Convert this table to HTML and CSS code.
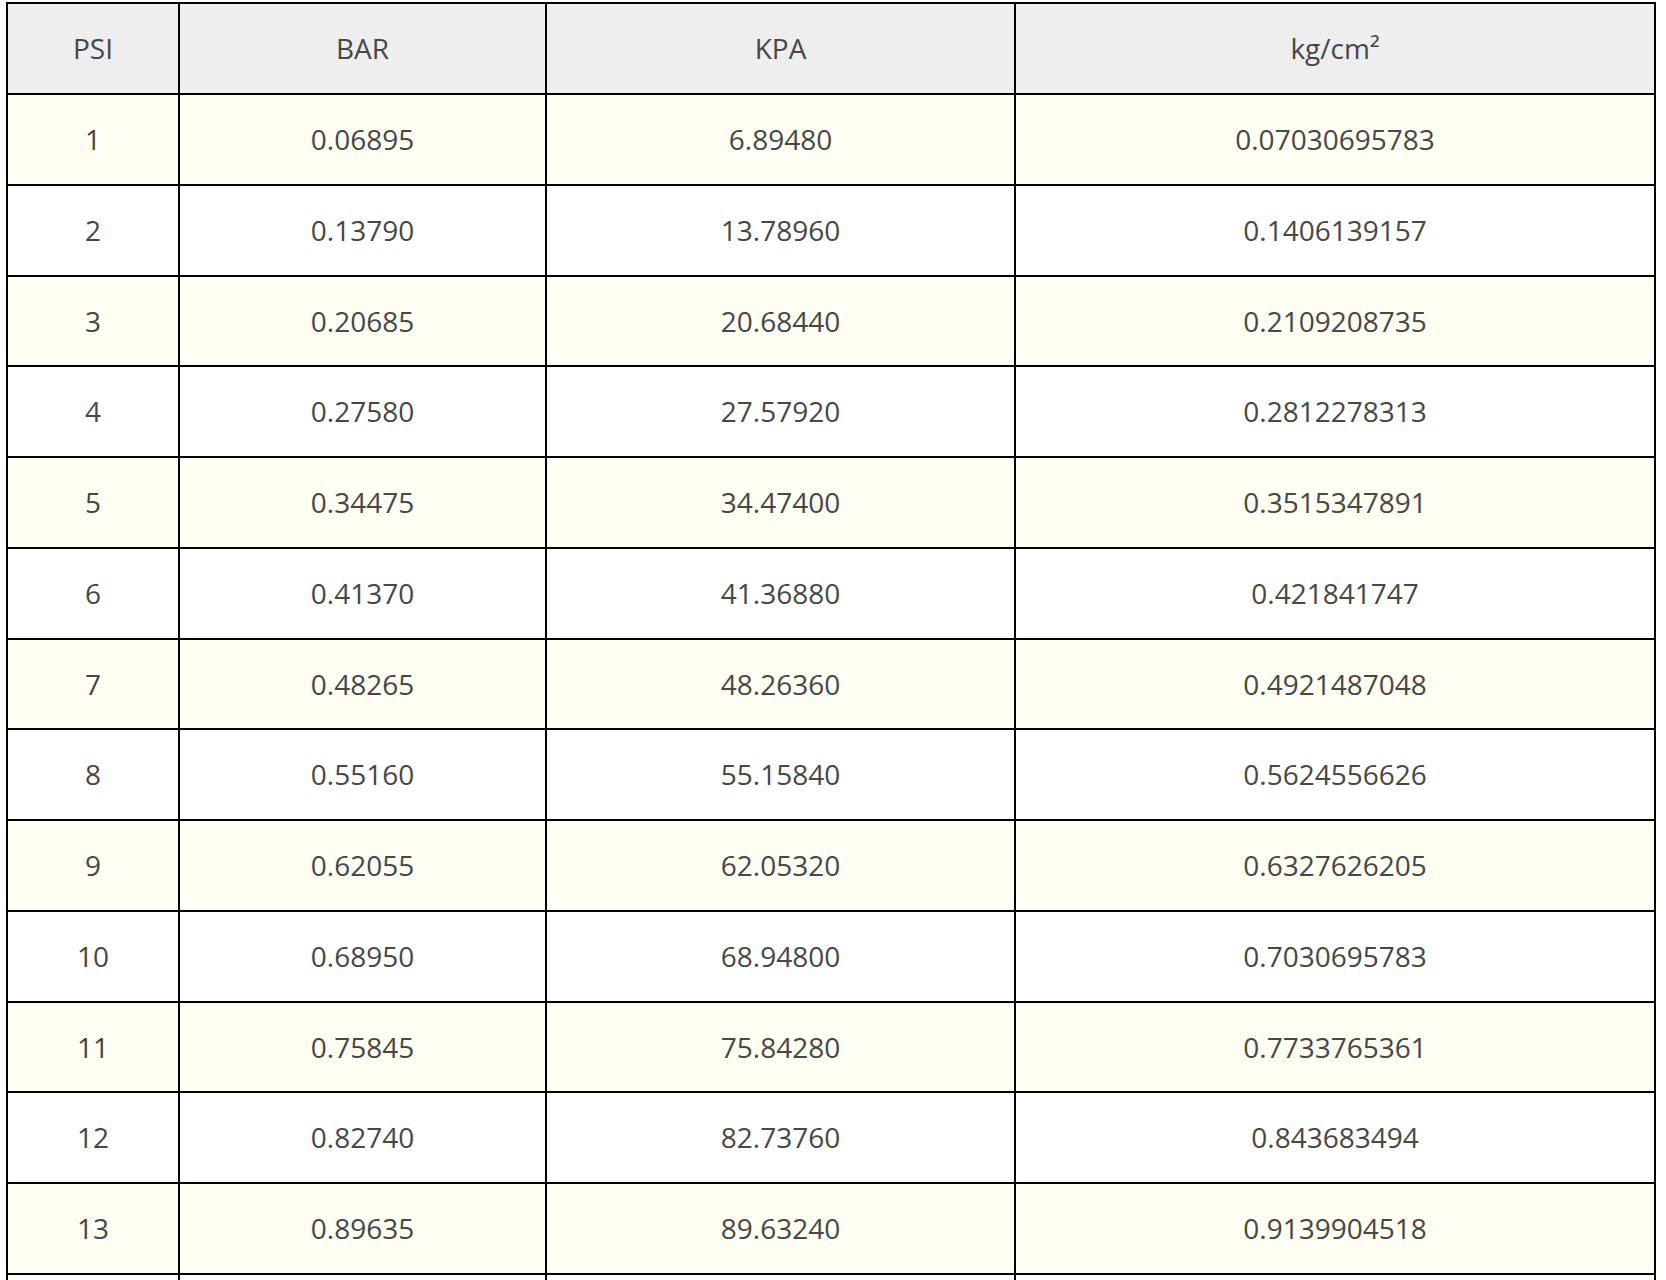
FILE: index.html
```html
<!DOCTYPE html>
<html lang="en">
<head>
<meta charset="utf-8">
<title>PSI conversion table</title>
<link rel="stylesheet" href="styles.css">
</head>
<body>
<table class="conv">
  <colgroup>
    <col class="c-psi">
    <col class="c-bar">
    <col class="c-kpa">
    <col class="c-kg">
  </colgroup>
  <thead>
    <tr><th>PSI</th><th>BAR</th><th>KPA</th><th>kg/cm²</th></tr>
  </thead>
  <tbody>
    <tr><td>1</td><td>0.06895</td><td>6.89480</td><td>0.07030695783</td></tr>
    <tr><td>2</td><td>0.13790</td><td>13.78960</td><td>0.1406139157</td></tr>
    <tr><td>3</td><td>0.20685</td><td>20.68440</td><td>0.2109208735</td></tr>
    <tr><td>4</td><td>0.27580</td><td>27.57920</td><td>0.2812278313</td></tr>
    <tr><td>5</td><td>0.34475</td><td>34.47400</td><td>0.3515347891</td></tr>
    <tr><td>6</td><td>0.41370</td><td>41.36880</td><td>0.421841747</td></tr>
    <tr><td>7</td><td>0.48265</td><td>48.26360</td><td>0.4921487048</td></tr>
    <tr><td>8</td><td>0.55160</td><td>55.15840</td><td>0.5624556626</td></tr>
    <tr><td>9</td><td>0.62055</td><td>62.05320</td><td>0.6327626205</td></tr>
    <tr><td>10</td><td>0.68950</td><td>68.94800</td><td>0.7030695783</td></tr>
    <tr><td>11</td><td>0.75845</td><td>75.84280</td><td>0.7733765361</td></tr>
    <tr><td>12</td><td>0.82740</td><td>82.73760</td><td>0.843683494</td></tr>
    <tr><td>13</td><td>0.89635</td><td>89.63240</td><td>0.9139904518</td></tr>
    <tr class="cut"><td></td><td></td><td></td><td></td></tr>
  </tbody>
</table>
</body>
</html>
```

FILE: styles.css
```css
html, body {
  margin: 0;
  padding: 0;
  background: #ffffff;
  overflow: hidden;
}

body {
  font-family: "Open Sans", "Liberation Sans", sans-serif;
  color: #474747;
}

.conv {
  margin: 2px 0 0 6px;
  width: 1650px;
  border-collapse: collapse;
  table-layout: fixed;
}

.c-psi { width: 172px; }
.c-bar { width: 367px; }
.c-kpa { width: 469px; }
.c-kg  { width: 640px; }

.conv th,
.conv td {
  border: 2px solid #000000;
  padding: 0;
  text-align: center;
  vertical-align: middle;
  font-size: 28px;
  font-weight: 400;
  line-height: 88.75px;
  color: #474747;
  white-space: nowrap;
}

.conv thead th {
  background: #eeeeee;
  line-height: 89px;
}

.conv tbody tr:nth-child(odd) td {
  background: #fefef2;
}

.conv tbody tr:nth-child(even) td {
  background: #ffffff;
}

.conv tbody tr.cut td {
  height: 88.75px;
}
```
